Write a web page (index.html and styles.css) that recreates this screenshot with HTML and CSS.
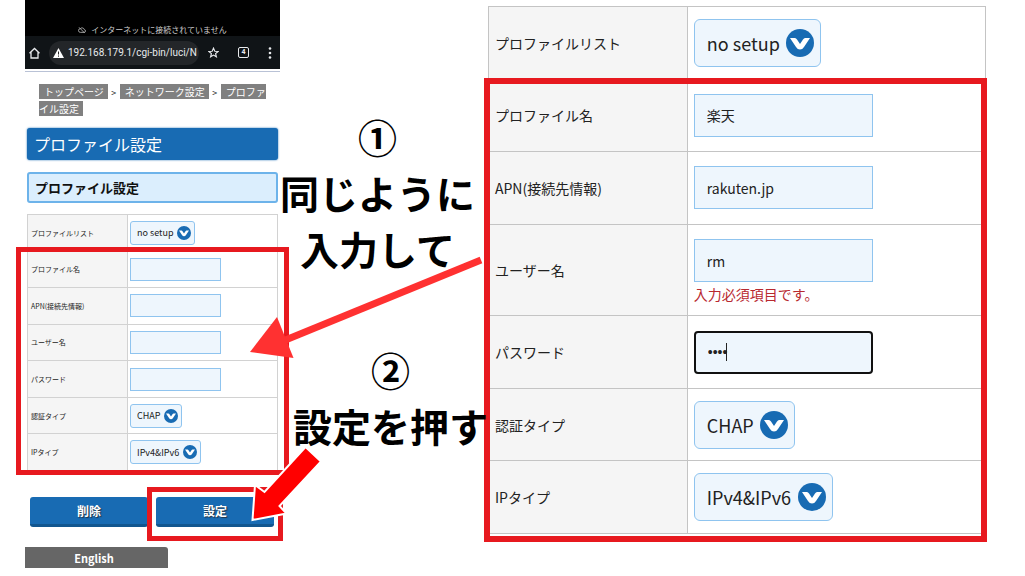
FILE: index.html
```html
<!DOCTYPE html>
<html lang="ja">
<head>
    <meta charset="UTF-8">
    <meta name="viewport" content="width=device-width, initial-scale=1">
    <title>プロファイル設定</title>
    <link rel="stylesheet" href="styles.css">
</head>
<body>
    <!-- 共通アイコン -->
    <svg class="sprite" aria-hidden="true">
        <symbol id="chevron" viewBox="0 0 28 28">
            <circle cx="14" cy="14" r="14" fill="#186bb3"/>
            <path d="M4 9h5q1 0 2 1.500l3 4.500 3-4.500q1-1.500 2-1.500h5l-6 9q-1.500 2.500-4 2.500t-4-2.500z" fill="#fff"/>
        </symbol>
    </svg>

    <main class="guide">
        <section class="phone">
            <div class="status-bar">
                <svg width="8" height="8" viewBox="0 0 24 24" fill="none" stroke="#bbb" stroke-width="2.500">
                    <path d="M7 19h11a4 4 0 0 0 1-8 7 7 0 0 0-12-3 5.500 5.500 0 0 0 0 11zM3 4l17 17"/>
                </svg>
                <span>インターネットに接続されていません</span>
            </div>
            <div class="toolbar">
                <svg width="11" height="12" viewBox="0 0 11 12" fill="none" stroke="#e8eaed" stroke-width="1.300">
                    <path d="M.5 6.200l5-4.700 5 4.700M2 5v6h7V5"/>
                </svg>
                <div class="address">
                    <svg width="11" height="10" viewBox="0 0 11 10">
                        <path d="M5.500 0L11 10H0z" fill="#fff"/>
                        <path d="M5.500 3.500v3M5.500 7.500v1.200" stroke="#222" stroke-width="1"/>
                    </svg>
                    <span>192.168.179.1/cgi-bin/luci/N</span>
                </div>
                <div class="toolbar-icons">
                    <svg width="11" height="11" viewBox="0 0 24 24" fill="none" stroke="#e8eaed" stroke-width="2.500">
                        <path d="M12 2.500l2.900 6.700 7.100.6-5.400 4.700 1.700 7-6.300-3.800-6.300 3.800 1.700-7L2 9.800l7.100-.6z"/>
                    </svg>
                    <span class="tab-count">4</span>
                    <svg width="4" height="12" viewBox="0 0 4 12" fill="#e8eaed">
                        <circle cx="2" cy="1.500" r="1.300"/>
                        <circle cx="2" cy="6" r="1.300"/>
                        <circle cx="2" cy="10.500" r="1.300"/>
                    </svg>
                </div>
            </div>

            <nav class="breadcrumb"><a href="#">トップページ</a><span>&gt;</span><a href="#">ネットワーク設定</a><span>&gt;</span><a href="#">プロファイル設定</a></nav>

            <h1 class="page-title">プロファイル設定</h1>
            <h2 class="section-title">プロファイル設定</h2>

            <form class="form-area small">
                <table class="settings">
                    <tr>
                        <th><label for="s-list">プロファイルリスト</label></th>
                        <td><span class="picker"><select id="s-list"><option>no setup</option></select><svg><use href="#chevron"/></svg></span></td>
                    </tr>
                    <tr>
                        <th><label for="s-name">プロファイル名</label></th>
                        <td><input type="text" id="s-name"></td>
                    </tr>
                    <tr>
                        <th><label for="s-apn">APN(接続先情報)</label></th>
                        <td><input type="text" id="s-apn"></td>
                    </tr>
                    <tr>
                        <th><label for="s-user">ユーザー名</label></th>
                        <td><input type="text" id="s-user"></td>
                    </tr>
                    <tr>
                        <th><label for="s-pass">パスワード</label></th>
                        <td><input type="password" id="s-pass"></td>
                    </tr>
                    <tr>
                        <th><label for="s-auth">認証タイプ</label></th>
                        <td><span class="picker"><select id="s-auth"><option>CHAP</option></select><svg><use href="#chevron"/></svg></span></td>
                    </tr>
                    <tr>
                        <th><label for="s-ip">IPタイプ</label></th>
                        <td><span class="picker"><select id="s-ip"><option>IPv4&amp;IPv6</option></select><svg><use href="#chevron"/></svg></span></td>
                    </tr>
                </table>
                <div class="frame"></div>
            </form>

            <div class="actions">
                <button type="button">削除</button>
                <div class="marked">
                    <button type="button">設定</button>
                    <div class="frame"></div>
                </div>
            </div>
            <button type="button" class="language">English</button>
        </section>

        <section class="notes">
            <p>①<br>同じように<br>入力して</p>
            <p class="second">②<br>設定を押す</p>
            <svg class="arrows" width="240" height="280" viewBox="0 0 240 280">
                <path d="M236 10L38 91" stroke="#ff3131" stroke-width="7"/>
                <path d="M5 102L32 67l16.500 41z" fill="#ff3131"/>
                <path d="M7.500 270L10 235l9.500 7L60.500 197 76 211.500 34.500 256l7 7.500z" fill="#f00" stroke="#fff" stroke-width="2"/>
            </svg>
        </section>

        <form class="form-area large">
            <table class="settings">
                <tr>
                    <th><label for="list">プロファイルリスト</label></th>
                    <td><span class="picker"><select id="list"><option>no setup</option></select><svg><use href="#chevron"/></svg></span></td>
                </tr>
                <tr>
                    <th><label for="name">プロファイル名</label></th>
                    <td><input type="text" id="name" value="楽天"></td>
                </tr>
                <tr>
                    <th><label for="apn">APN(接続先情報)</label></th>
                    <td><input type="text" id="apn" value="rakuten.jp"></td>
                </tr>
                <tr class="has-error">
                    <th><label for="user">ユーザー名</label></th>
                    <td>
                        <input type="text" id="user" value="rm">
                        <p class="error">入力必須項目です。</p>
                    </td>
                </tr>
                <tr>
                    <th><label for="pass">パスワード</label></th>
                    <td><div class="active-field"><input type="password" id="pass" value="0000"><span class="caret"></span></div></td>
                </tr>
                <tr>
                    <th><label for="auth">認証タイプ</label></th>
                    <td><span class="picker"><select id="auth"><option>CHAP</option></select><svg><use href="#chevron"/></svg></span></td>
                </tr>
                <tr>
                    <th><label for="ip">IPタイプ</label></th>
                    <td><span class="picker"><select id="ip"><option>IPv4&amp;IPv6</option></select><svg><use href="#chevron"/></svg></span></td>
                </tr>
            </table>
            <div class="frame"></div>
        </form>
    </main>
</body>
</html>
```
FILE: styles.css
```css
* {
    box-sizing: border-box;
}
body {
    margin: 0;
    background-color: #fff;
    color: #222;
    font-family: "Noto Sans CJK JP", sans-serif;
}
h1, h2, p {
    margin: 0;
}
input, select, button {
    margin: 0;
    font-family: inherit;
    color: inherit;
}
.sprite {
    display: none;
}
.guide {
    display: grid;
    grid-template-columns: 255fr 208fr 498fr;
    align-items: start;
    padding: 0 39px 0 25px;
}

/* スマホ画面 */
.status-bar {
    display: flex;
    justify-content: center;
    align-items: flex-end;
    gap: 5px;
    height: 36px;
    background-color: #000;
    color: #ccc;
    font-size: 8px;
    line-height: 12px;
}
.status-bar svg {
    margin-bottom: 2px;
}
.toolbar {
    display: flex;
    align-items: center;
    gap: 9px;
    height: 33px;
    padding: 0 8px 0 4px;
    background-color: #101417;
    color: #e8eaed;
}
.address {
    display: flex;
    align-items: center;
    gap: 4px;
    width: 150px;
    height: 24px;
    padding: 0 4px;
    border-radius: 12px;
    background-color: #232629;
    font: 10px/24px "Roboto", sans-serif;
    white-space: nowrap;
}
.address svg {
    flex: none;
}
.toolbar-icons {
    display: flex;
    align-items: center;
    gap: 19px;
    margin-left: auto;
}
.tab-count {
    width: 11px;
    height: 11px;
    border: 1px solid #e8eaed;
    border-radius: 2px;
    font: bold 7px/9px "Roboto", sans-serif;
    text-align: center;
}
.breadcrumb {
    margin-top: 2px;
    padding: 12px 10px 0 14px;
    border-top: 1px solid #b9c2d6;
    font-size: 10px;
    line-height: 16px;
}
.breadcrumb a {
    padding: 0 4px 0 5px;
    background-color: #808080;
    color: #fff;
    text-decoration: none;
}
.breadcrumb span {
    display: inline-block;
    width: 12px;
    font-size: 9px;
    text-align: center;
}
.page-title {
    margin: 11px 2px 0;
    padding: 0 7px;
    border-radius: 3px;
    background-color: #186bb3;
    box-shadow: 0 0 2px #186bb3;
    color: #fff;
    font-size: 16px;
    font-weight: normal;
    line-height: 32px;
}
.section-title {
    margin: 12px 2px 11px;
    padding: 0 6px;
    border: 2px solid #6db3ea;
    border-radius: 3px;
    background-color: #dbeefd;
    color: #111;
    font-size: 13px;
    line-height: 27px;
}

/* 設定テーブル */
.form-area {
    position: relative;
}
.settings {
    width: 100%;
    border-collapse: collapse;
}
.settings th,
.settings td {
    padding: 0 6px;
    border: 1px solid #c4c4c4;
    text-align: left;
    font-weight: normal;
}
.settings th {
    width: 40%;
    background-color: #f5f5f5;
}
.settings input,
.settings select {
    display: block;
    border: 1px solid #8fc4ef;
    background-color: #eef6fd;
}
.settings select {
    height: 100%;
    appearance: none;
}
.picker {
    display: inline-block;
    position: relative;
    vertical-align: middle;
}
.picker svg {
    position: absolute;
    top: 50%;
    transform: translateY(-50%);
    pointer-events: none;
}
.frame {
    position: absolute;
    border: 5px solid #e7191f;
    pointer-events: none;
}

.small {
    margin: 0 2px;
}
.small .settings {
    height: 257px;
    font-size: 7px;
}
.small tr {
    height: 36px;
}
.small th {
    padding: 0 3px;
}
.small td {
    padding: 0 2px;
}
.small th,
.small td {
    border-color: #d2d2d2;
}
.small input {
    width: 91px;
    height: 23px;
}
.small .picker {
    height: 24px;
}
.small select {
    padding: 0 20px 0 6px;
    border-radius: 3px;
    font-size: 9px;
}
.small .picker svg {
    right: 4px;
    width: 14px;
    height: 14px;
}
.small .frame {
    inset: 33px -11px -4px;
}

.large {
    margin-top: 6px;
}
.large .settings {
    height: 528px;
    font-size: 14px;
}
.large tr {
    height: 72px;
}
.large .has-error {
    height: 91px;
}
.large .has-error td {
    padding-top: 4px;
}
.large input {
    width: 179px;
    height: 43px;
    padding: 0 12px;
    font-size: 14px;
}
.large .picker {
    height: 48px;
}
.large select {
    padding: 0 40px 0 12px;
    border-radius: 6px;
    font-size: 18px;
}
.large .picker svg {
    right: 7px;
    width: 28px;
    height: 28px;
}
.large .frame {
    inset: 72px -1px -8px -4px;
    border-width: 6px;
}
.error {
    padding-top: 2px;
    color: #b8292f;
    line-height: 20px;
}
.active-field {
    position: relative;
}
.active-field input {
    border: 2px solid #111;
    border-radius: 4px;
    font-family: "Liberation Sans", sans-serif;
}
.caret {
    position: absolute;
    top: 12px;
    left: 32px;
    width: 1px;
    height: 18px;
    background-color: #222;
}

/* ボタン */
.actions {
    display: grid;
    grid-template-columns: 1fr 1fr;
    gap: 8px;
    margin: 26px 6px 0 5px;
}
.actions button {
    width: 100%;
    height: 30px;
    padding: 0;
    border: 0;
    border-bottom: 3px solid #12568f;
    border-radius: 3px;
    background-color: #186bb3;
    color: #fff;
    font-size: 12px;
    font-weight: bold;
    text-shadow: 1px 1px 1px #234;
}
.marked {
    position: relative;
}
.marked .frame {
    inset: -10px -9px -14px;
}
.language {
    display: block;
    width: 143px;
    height: 21px;
    margin-top: 20px;
    padding: 0 5px 0 0;
    border: 0;
    border-radius: 0 3px 0 0;
    background-color: #666;
    font-size: 11px;
    font-weight: bold;
}
.phone .language {
    color: #fff;
}

/* 手順の説明 */
.notes {
    position: relative;
    z-index: 1;
    display: flex;
    flex-direction: column;
    gap: 65px;
    padding-top: 108px;
    color: #000;
    font-size: 39px;
    font-weight: bold;
    line-height: 56px;
    text-align: center;
    white-space: nowrap;
}
.notes p {
    align-self: flex-start;
}
.notes .second {
    align-self: flex-end;
}
.arrows {
    position: absolute;
    top: 250px;
    left: -35px;
}
```
